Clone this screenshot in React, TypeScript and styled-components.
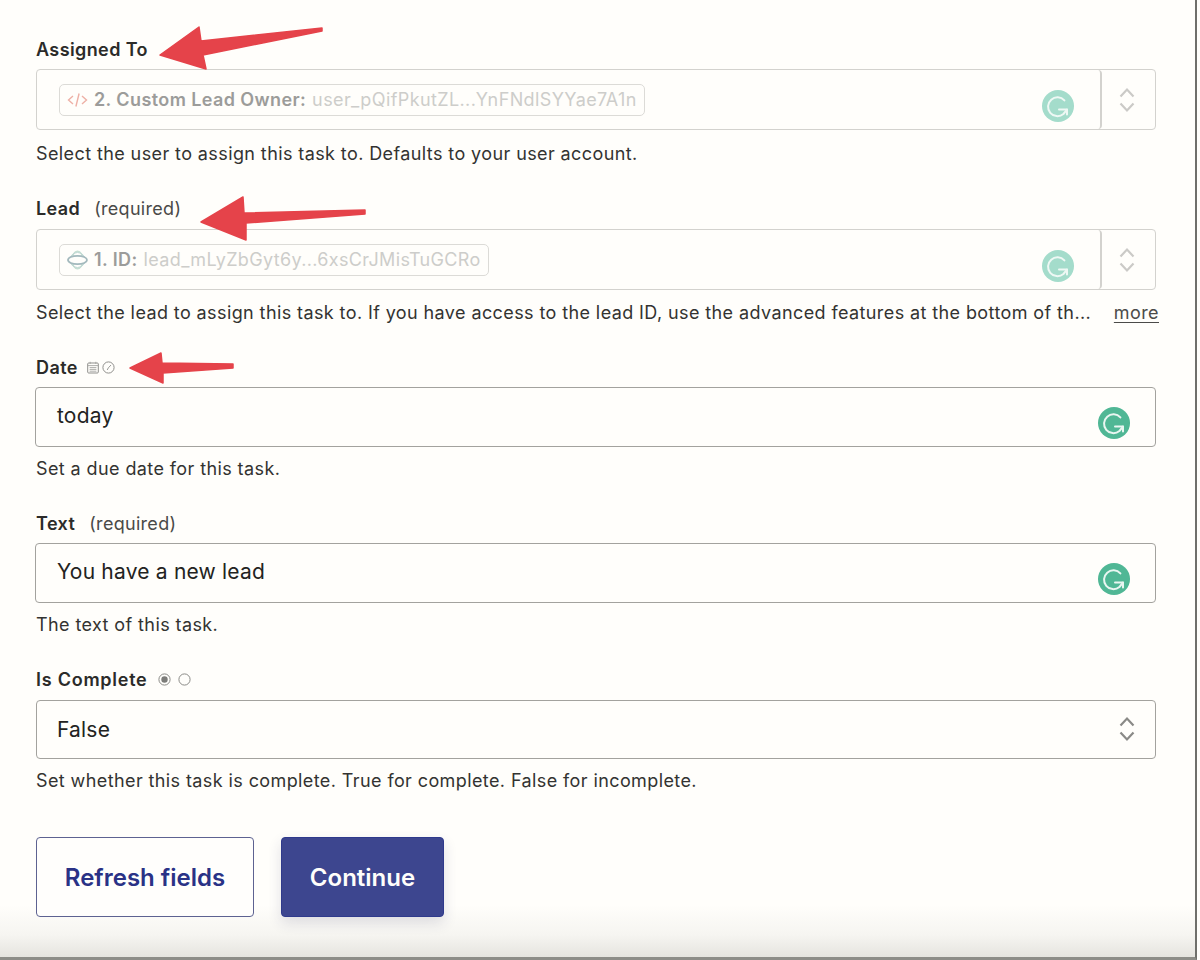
import React from "react";
import styled, { createGlobalStyle } from "styled-components";

const GlobalStyle = createGlobalStyle`
  html, body { margin: 0; padding: 0; background: #fffefb; }
  body { font-family: Inter, "Liberation Sans", sans-serif; color: #2a2a28; }
`;

const Screen = styled.div`
  position: relative;
  box-sizing: border-box;
  width: 1197px;
  height: 960px;
  padding: 39px 0 0 36px;
  overflow: hidden;
  border-right: 2px solid #6f6f6b;
  border-bottom: 3px solid #8d8d88;
  background: linear-gradient(to bottom, #fffefb 0, #fffefb 905px, #f6f5f1 935px, #e5e4df 957px);
`;

const Field = styled.section`
  width: 1120px;
  margin-bottom: 35px;
`;

const LabelRow = styled.div<{ $gap: number }>`
  display: flex;
  align-items: center;
  height: 20px;
  margin-bottom: ${(p) => p.$gap}px;
`;

const LabelText = styled.span<{ $spacing?: number }>`
  font-size: 18px;
  font-weight: 600;
  letter-spacing: ${(p) => p.$spacing ?? 0.4}px;
  color: #2b2b29;
`;

const Required = styled.span`
  margin-left: 14px;
  font-size: 18px;
  letter-spacing: 0.3px;
  color: #4a4a48;
`;

const LabelIcons = styled.span<{ $gap: number; $left: number }>`
  display: inline-flex;
  align-items: center;
  gap: ${(p) => p.$gap}px;
  margin-left: ${(p) => p.$left}px;
`;

const SelectWrap = styled.div`
  display: flex;
  box-sizing: border-box;
  height: 61px;
  border: 1.5px solid #d3d2ce;
  border-radius: 4px;
`;

const SelectMain = styled.div`
  position: relative;
  box-sizing: border-box;
  flex: 1;
  padding: 13.5px 0 0 22px;
  border-right: 2px solid #d3d2ce;
  border-radius: 4px;
`;

const SelectSide = styled.div`
  display: flex;
  align-items: center;
  justify-content: center;
  box-sizing: border-box;
  width: 53px;
  padding-right: 3px;
`;

const Pill = styled.div`
  display: inline-flex;
  align-items: center;
  box-sizing: border-box;
  height: 32px;
  padding: 0 7px;
  gap: 6px;
  white-space: nowrap;
  border: 1.5px solid #dcdbd7;
  border-radius: 5px;
  font-size: 18px;
  letter-spacing: 0.4px;
`;

const PillKey = styled.span`
  font-weight: 600;
  color: #9c9c9a;
`;

const PillValue = styled.span<{ $spacing?: number }>`
  margin-left: 1px;
  letter-spacing: ${(p) => p.$spacing ?? 0.4}px;
  color: #cdcdca;
`;

const InputBox = styled.div<{ $height: number; $wide?: boolean }>`
  position: relative;
  display: flex;
  align-items: center;
  justify-content: space-between;
  box-sizing: border-box;
  height: ${(p) => p.$height}px;
  margin-left: ${(p) => (p.$wide ? "-1px" : "0")};
  padding: 0 20px ${(p) => (p.$wide ? "3px" : "1px")} ${(p) => (p.$wide ? "21px" : "20px")};
  border: 1.5px solid #a3a29e;
  border-radius: 4px;
  font-size: 21px;
  letter-spacing: 0.2px;
  color: #232321;
`;

const GrammarlySpot = styled.span<{ $right: number }>`
  position: absolute;
  right: ${(p) => p.$right}px;
  bottom: 7px;
  display: block;
  width: 32px;
  height: 32px;
`;

const Help = styled.div<{ $gap: number }>`
  display: flex;
  align-items: center;
  justify-content: space-between;
  height: 20px;
  margin-top: ${(p) => p.$gap}px;
  font-size: 18px;
  letter-spacing: 0.4px;
  color: #333331;
`;

const HelpClip = styled.span`
  white-space: nowrap;
`;

const MoreLink = styled.a`
  margin-right: -3px;
  color: #4b4b49;
  text-decoration: underline;
  text-underline-offset: 3px;
`;

const Buttons = styled.div`
  display: flex;
  gap: 27px;
  margin-top: 47px;
`;

const Button = styled.button<{ $primary?: boolean }>`
  box-sizing: border-box;
  height: 80px;
  border-radius: 4px;
  font-family: inherit;
  font-size: 24px;
  font-weight: 600;
  border: 1.5px solid ${(p) => (p.$primary ? "#2f3a8c" : "#5d6291")};
  width: ${(p) => (p.$primary ? "163px" : "218px")};
  color: ${(p) => (p.$primary ? "#fffefb" : "#2a3286")};
  background: ${(p) => (p.$primary ? "#3d468f" : "#fffefc")};
  box-shadow: ${(p) => (p.$primary ? "0 6px 14px rgba(40, 45, 90, 0.14)" : "none")};
`;

const Arrow = styled.svg`
  position: absolute;
  top: 0;
  left: 0;
  width: 1198px;
  height: 960px;
  pointer-events: none;
`;

const Grammarly = ({ faded }: { faded?: boolean }) => {
  const mark = faded ? "#eef8f4" : "#e9f6f1";
  return (
    <svg width="32" height="32" viewBox="0 0 32 32">
      <circle cx="16" cy="16" r="16" fill={faded ? "#a4dccb" : "#50b795"} />
      <path
        d="M22.4 10.4A9.4 9.4 0 1 0 21.4 24L25 19.6"
        fill="none"
        stroke={mark}
        strokeWidth="2"
        strokeLinecap="round"
        strokeLinejoin="round"
      />
      <path
        d="M17 19.6H25V24.6"
        fill="none"
        stroke={mark}
        strokeWidth="2"
        strokeLinecap="round"
        strokeLinejoin="round"
      />
    </svg>
  );
};

const Chevrons = ({ faded }: { faded?: boolean }) => (
  <svg width="16" height="26" viewBox="0 0 16 26">
    <path
      d="M1.5 9.5L8 2.5L14.5 9.5M1.5 16.5L8 23.5L14.5 16.5"
      fill="none"
      stroke={faded ? "#cbcac7" : "#8a8a87"}
      strokeWidth="2.2"
    />
  </svg>
);

const CodeIcon = () => (
  <svg width="21" height="18" viewBox="0 0 21 18">
    <path
      d="M6 5L1.5 9L6 13M15 5L19.5 9L15 13M12.1 2.5L8.9 15.5"
      fill="none"
      stroke="#eeb0a6"
      strokeWidth="1.4"
    />
  </svg>
);

const LeadIcon = () => (
  <svg width="21" height="20" viewBox="0 0 21 20">
    <ellipse cx="10.5" cy="10" rx="5.5" ry="8.8" fill="none" stroke="#c6dfd2" strokeWidth="1.4" />
    <ellipse cx="10.5" cy="10" rx="7.5" ry="7.5" fill="none" stroke="#bcd6d2" strokeWidth="1" />
    <ellipse cx="10.5" cy="10" rx="9.5" ry="4.2" fill="#fffefb" stroke="#a3b9bd" strokeWidth="1.8" />
  </svg>
);

const CalendarIcon = () => (
  <svg width="12" height="13" viewBox="0 0 12 13">
    <rect x="0.7" y="2" width="10.6" height="10" rx="1" fill="none" stroke="#8f8f8c" strokeWidth="1" />
    <path d="M1 4.6H11M3.2 0.8V3M8.8 0.8V3M2.6 6.6H9.4M2.6 8.4H9.4M2.6 10.2H9.4" stroke="#a5a5a2" strokeWidth="0.9" />
  </svg>
);

const ClockIcon = () => (
  <svg width="13" height="13" viewBox="0 0 13 13">
    <circle cx="6.5" cy="6.5" r="5.6" fill="none" stroke="#8f8f8c" strokeWidth="1" />
    <path d="M9 4L6.4 6.8L5.2 9" fill="none" stroke="#8f8f8c" strokeWidth="0.9" />
  </svg>
);

const RadioIcon = ({ checked }: { checked?: boolean }) => (
  <svg width="13" height="13" viewBox="0 0 13 13">
    <circle cx="6.5" cy="6.5" r="5.6" fill="none" stroke="#8a8a87" strokeWidth="1" />
    {checked && <circle cx="6.5" cy="6.5" r="3.2" fill="#7c7c79" />}
  </svg>
);

const arrows = [
  "160,55 199,27 201,41 322,28 322,31 203,55 206,69",
  "201,222 243,197 244,213 365,210 365,214 246,223 246,240",
  "130,368 161,353 162,363 233,364 233,368 163,373 163,383",
];

export default function App() {
  return (
    <>
      <GlobalStyle />
      <Screen>
        <Field>
          <LabelRow $gap={10}>
            <LabelText>Assigned To</LabelText>
          </LabelRow>
          <SelectWrap>
            <SelectMain>
              <Pill>
                <CodeIcon />
                <span>
                  <PillKey>2. Custom Lead Owner: </PillKey>
                  <PillValue>user_pQifPkutZL...YnFNdlSYYae7A1n</PillValue>
                </span>
              </Pill>
              <GrammarlySpot $right={26}>
                <Grammarly faded />
              </GrammarlySpot>
            </SelectMain>
            <SelectSide>
              <Chevrons faded />
            </SelectSide>
          </SelectWrap>
          <Help $gap={13}>
            <HelpClip>Select the user to assign this task to. Defaults to your user account.</HelpClip>
          </Help>
        </Field>

        <Field>
          <LabelRow $gap={11}>
            <LabelText>Lead</LabelText>
            <Required>(required)</Required>
          </LabelRow>
          <SelectWrap>
            <SelectMain>
              <Pill>
                <LeadIcon />
                <span>
                  <PillKey>1. ID: </PillKey>
                  <PillValue $spacing={0.35}>lead_mLyZbGyt6y...6xsCrJMisTuGCRo</PillValue>
                </span>
              </Pill>
              <GrammarlySpot $right={26}>
                <Grammarly faded />
              </GrammarlySpot>
            </SelectMain>
            <SelectSide>
              <Chevrons faded />
            </SelectSide>
          </SelectWrap>
          <Help $gap={12}>
            <HelpClip>
              Select the lead to assign this task to. If you have access to the lead ID, use the advanced features at the bottom of th...
            </HelpClip>
            <MoreLink>more</MoreLink>
          </Help>
        </Field>

        <Field>
          <LabelRow $gap={10}>
            <LabelText>Date</LabelText>
            <LabelIcons $gap={3} $left={9}>
              <CalendarIcon />
              <ClockIcon />
            </LabelIcons>
          </LabelRow>
          <InputBox $height={60} $wide>
            today
            <GrammarlySpot $right={25}>
              <Grammarly />
            </GrammarlySpot>
          </InputBox>
          <Help $gap={11}>
            <HelpClip>Set a due date for this task.</HelpClip>
          </Help>
        </Field>

        <Field>
          <LabelRow $gap={10}>
            <LabelText>Text</LabelText>
            <Required>(required)</Required>
          </LabelRow>
          <InputBox $height={60} $wide>
            You have a new lead
            <GrammarlySpot $right={25}>
              <Grammarly />
            </GrammarlySpot>
          </InputBox>
          <Help $gap={11}>
            <HelpClip>The text of this task.</HelpClip>
          </Help>
        </Field>

        <Field>
          <LabelRow $gap={11}>
            <LabelText $spacing={0.75}>Is Complete</LabelText>
            <LabelIcons $gap={7} $left={10}>
              <RadioIcon checked />
              <RadioIcon />
            </LabelIcons>
          </LabelRow>
          <InputBox $height={59}>
            False
            <Chevrons />
          </InputBox>
          <Help $gap={11}>
            <HelpClip>Set whether this task is complete. True for complete. False for incomplete.</HelpClip>
          </Help>
        </Field>

        <Buttons>
          <Button>Refresh fields</Button>
          <Button $primary>Continue</Button>
        </Buttons>

        <Arrow viewBox="0 0 1198 960">
          {arrows.map((points) => (
            <polygon key={points} points={points} fill="#e5434a" stroke="#e5434a" strokeWidth="1.5" strokeLinejoin="round" />
          ))}
        </Arrow>
      </Screen>
    </>
  );
}
